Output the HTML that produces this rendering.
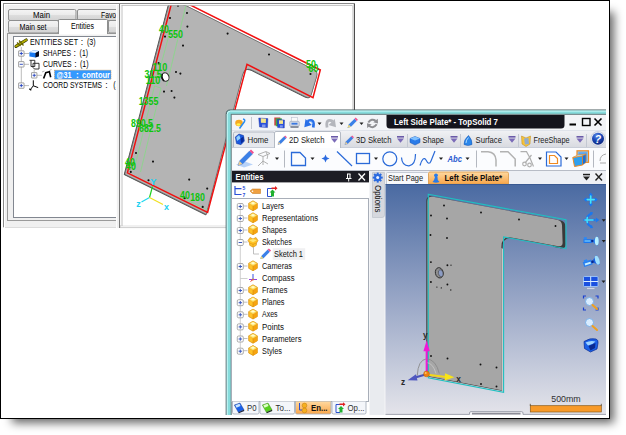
<!DOCTYPE html>
<html><head><meta charset="utf-8"><title>TopSolid</title>
<style>
html,body{margin:0;padding:0;background:#fff;overflow:hidden}
body{width:626px;height:435px;position:relative;font-family:"Liberation Sans", sans-serif}
#shadow{position:absolute;left:12px;top:12px;width:602px;height:411px;background:rgba(0,0,0,.6);filter:blur(5px)}
#frame{position:absolute;left:0;top:0;width:608px;height:416.600px;border:1px solid #000;border-right-width:1.300px;border-bottom-width:1.400px;background:#fff}
svg{position:absolute;left:0;top:0;font-family:"Liberation Sans", sans-serif}
</style></head><body>
<div id="shadow"></div>
<div id="frame"></div>
<svg width="626" height="435" viewBox="0 0 626 435">
<defs>
<linearGradient id="tabg" x1="0" y1="0" x2="0" y2="1"><stop offset="0" stop-color="#f4f4f4"/><stop offset=".5" stop-color="#ebebeb"/><stop offset=".5" stop-color="#dedede"/><stop offset="1" stop-color="#d2d2d2"/></linearGradient>
<linearGradient id="viewg" x1="0" y1="0" x2="0" y2="1"><stop offset="0" stop-color="#4a6aa2"/><stop offset=".5" stop-color="#98a6c6"/><stop offset="1" stop-color="#e4e4ea"/></linearGradient>
<linearGradient id="ribg" x1="0" y1="0" x2="0" y2="1"><stop offset="0" stop-color="#f0f1f4"/><stop offset="1" stop-color="#d8dae0"/></linearGradient>
<linearGradient id="org" x1="0" y1="0" x2="0" y2="1"><stop offset="0" stop-color="#ffd9a0"/><stop offset="1" stop-color="#f9a64a"/></linearGradient>
<linearGradient id="cubeg" x1="0" y1="0" x2="1" y2="1"><stop offset="0" stop-color="#ffe27a"/><stop offset="1" stop-color="#f0a010"/></linearGradient>
<radialGradient id="blueball" cx=".35" cy=".3" r=".8"><stop offset="0" stop-color="#9fd0ff"/><stop offset=".5" stop-color="#2a6fd8"/><stop offset="1" stop-color="#0b2f8a"/></radialGradient>
<radialGradient id="helpball" cx=".4" cy=".25" r=".85"><stop offset="0" stop-color="#5a8ae8"/><stop offset=".45" stop-color="#1a48b8"/><stop offset="1" stop-color="#0a1e70"/></radialGradient>
<clipPath id="v1clip"><rect x="122.4" y="5.8" width="229.6" height="219.2"/></clipPath>
<clipPath id="imgclip"><rect x="3" y="3" width="603" height="412"/></clipPath>
<clipPath id="p1clip"><rect x="3" y="3" width="113" height="225"/></clipPath>
</defs>
<g clip-path="url(#imgclip)">
<rect x="3" y="3" width="352" height="225" fill="#f0f0f0" />
<line x1="3" y1="3.5" x2="355" y2="3.5" stroke="#8a8a8a" stroke-width="1" />
<line x1="3.5" y1="3" x2="3.5" y2="228" stroke="#8a8a8a" stroke-width="1" />
<line x1="3" y1="227.5" x2="120" y2="227.5" stroke="#dcdcdc" stroke-width="1" />
<line x1="4" y1="4.5" x2="355" y2="4.5" stroke="#ffffff" stroke-width="1" />
<line x1="4.5" y1="4" x2="4.5" y2="228" stroke="#ffffff" stroke-width="1" />
<g clip-path="url(#p1clip)">
<rect x="7.5" y="33.5" width="120" height="187" fill="#f0f0f0" stroke="#9a9a9a" stroke-width="1" />
<rect x="8.5" y="9.5" width="67.5" height="11" fill="url(#tabg)" stroke="#8e8f8f" stroke-width="1" rx="1.5" />
<rect x="77.5" y="9.5" width="60" height="11" fill="url(#tabg)" stroke="#8e8f8f" stroke-width="1" rx="1.5" />
<rect x="8.5" y="20.5" width="50" height="12.5" fill="url(#tabg)" stroke="#8e8f8f" stroke-width="1" rx="1.5" />
<rect x="108.5" y="20.5" width="40" height="12.5" fill="url(#tabg)" stroke="#8e8f8f" stroke-width="1" rx="1.5" />
<path d="M58.5 34 V20 Q58.5 19.5 59.5 19.5 H106.5 Q107.5 19.5 107.5 20.5 V34" fill="#ffffff" stroke="#8e8f8f"/>
<rect x="59" y="33" width="48" height="1.5" fill="#ffffff" />
<text x="41.5" y="18" font-size="8.5" fill="#000" font-weight="normal" text-anchor="middle" textLength="17" lengthAdjust="spacingAndGlyphs" >Main</text>
<text x="101" y="18" font-size="8.5" fill="#000" font-weight="normal" text-anchor="start" textLength="28" lengthAdjust="spacingAndGlyphs" >Favorites</text>
<text x="33" y="30" font-size="8.5" fill="#000" font-weight="normal" text-anchor="middle" textLength="27" lengthAdjust="spacingAndGlyphs" >Main set</text>
<text x="82.5" y="29" font-size="8.5" fill="#000" font-weight="normal" text-anchor="middle" textLength="23" lengthAdjust="spacingAndGlyphs" >Entities</text>
<rect x="13.5" y="36.5" width="120" height="181" fill="#ffffff" stroke="#828790" stroke-width="1" />
<g stroke="#b4b4b4" stroke-width=".9">
<line x1="21.3" y1="47" x2="21.3" y2="85.5" stroke="#b4b4b4" stroke-width="0.9" />
<line x1="24" y1="53.5" x2="29" y2="53.5" stroke="#b4b4b4" stroke-width="0.9" />
<line x1="24" y1="64.3" x2="29" y2="64.3" stroke="#b4b4b4" stroke-width="0.9" />
<line x1="24" y1="85.6" x2="29" y2="85.6" stroke="#b4b4b4" stroke-width="0.9" />
<line x1="34.2" y1="69.5" x2="34.2" y2="75" stroke="#b4b4b4" stroke-width="0.9" />
<line x1="37" y1="75.3" x2="42" y2="75.3" stroke="#b4b4b4" stroke-width="0.9" />
</g>
<path d="M16 46.300 L26.200 40" stroke="#3a3a00" stroke-width="3.200" stroke-linecap="round"/><path d="M16 46.300 L26.200 40" stroke="#b4b000" stroke-width="1.800" stroke-linecap="round" stroke-dasharray="2 .8"/><path d="M19 40.500 L23.500 45.500 M17 42.500 L20.500 46" stroke="#6a6800" stroke-width="1.200"/>
<text x="30" y="45.4" font-size="8.6" fill="#000" font-weight="normal" text-anchor="start" textLength="48" lengthAdjust="spacingAndGlyphs" >ENTITIES SET</text>
<text x="80.8" y="45.2" font-size="8.6" fill="#000" font-weight="normal" text-anchor="start" >:</text>
<text x="87" y="45.4" font-size="8.6" fill="#000" font-weight="normal" text-anchor="start" textLength="8.6" lengthAdjust="spacingAndGlyphs" >(3)</text>
<rect x="18.6" y="50.8" width="5.4" height="5.4" fill="#fdfdfd" stroke="#8c8c8c" stroke-width="0.8" rx="0.3" />
<line x1="19.7" y1="53.5" x2="22.900000000000002" y2="53.5" stroke="#2040c0" stroke-width="0.9" />
<line x1="21.3" y1="51.9" x2="21.3" y2="55.1" stroke="#2040c0" stroke-width="0.9" />
<path d="M29.400 52.300 L33.500 50.200 L39 51 L39 56.300 L35.500 57.500 L29.400 56.500 Z" fill="#1878f0"/><path d="M29.400 52.300 L33.500 50.200 L39 51 L35.500 53 Z" fill="#e8f4ff"/><path d="M35.500 53 L39 51 L39 56.300 L35.500 57.500 Z" fill="#080818"/>
<text x="43" y="56.3" font-size="8.6" fill="#000" font-weight="normal" text-anchor="start" textLength="28" lengthAdjust="spacingAndGlyphs" >SHAPES</text>
<text x="73.6" y="56.1" font-size="8.6" fill="#000" font-weight="normal" text-anchor="start" >:</text>
<text x="79.6" y="56.3" font-size="8.6" fill="#000" font-weight="normal" text-anchor="start" textLength="8.4" lengthAdjust="spacingAndGlyphs" >(1)</text>
<rect x="18.6" y="61.599999999999994" width="5.4" height="5.4" fill="#fdfdfd" stroke="#8c8c8c" stroke-width="0.8" rx="0.3" />
<line x1="19.7" y1="64.3" x2="22.900000000000002" y2="64.3" stroke="#2040c0" stroke-width="0.9" />
<path d="M29.500 60.300 H34.800 V66.500 H31 V60.300 M33 63.300 H39 V69 H34.500 L33 67.500 Z" fill="none" stroke="#202020" stroke-width=".9"/>
<text x="43" y="67" font-size="8.6" fill="#000" font-weight="normal" text-anchor="start" textLength="28.6" lengthAdjust="spacingAndGlyphs" >CURVES</text>
<text x="74.2" y="66.8" font-size="8.6" fill="#000" font-weight="normal" text-anchor="start" >:</text>
<text x="80" y="67" font-size="8.6" fill="#000" font-weight="normal" text-anchor="start" textLength="8.6" lengthAdjust="spacingAndGlyphs" >(1)</text>
<rect x="31.500000000000004" y="72.6" width="5.4" height="5.4" fill="#fdfdfd" stroke="#8c8c8c" stroke-width="0.8" rx="0.3" />
<line x1="32.6" y1="75.3" x2="35.800000000000004" y2="75.3" stroke="#2040c0" stroke-width="0.9" />
<line x1="34.2" y1="73.7" x2="34.2" y2="76.89999999999999" stroke="#2040c0" stroke-width="0.9" />
<path d="M43.600 78.500 L45.800 72.700 L49.400 71.800 L50.700 77.200" fill="none" stroke="#000" stroke-width="1.600"/>
<line x1="42" y1="72" x2="44.5" y2="71" stroke="#808080" stroke-width="0.6" />
<line x1="49.4" y1="70.5" x2="51.5" y2="69.5" stroke="#808080" stroke-width="0.6" />
<rect x="54.5" y="70.2" width="56.5" height="9" fill="#3399ff" />
<rect x="54.5" y="70.2" width="56.5" height="9" fill="none" stroke="#c89858" stroke-width="0.8" stroke-dasharray="1 1"/>
<text x="56.6" y="77.8" font-size="8.4" fill="#ffffff" font-weight="bold" text-anchor="start" textLength="15" lengthAdjust="spacingAndGlyphs" >@31</text>
<text x="76" y="77.6" font-size="8.4" fill="#ffffff" font-weight="bold" text-anchor="start" >:</text>
<text x="82" y="77.8" font-size="8.4" fill="#ffffff" font-weight="bold" text-anchor="start" textLength="28" lengthAdjust="spacingAndGlyphs" >contour</text>
<rect x="18.6" y="82.89999999999999" width="5.4" height="5.4" fill="#fdfdfd" stroke="#8c8c8c" stroke-width="0.8" rx="0.3" />
<line x1="19.7" y1="85.6" x2="22.900000000000002" y2="85.6" stroke="#2040c0" stroke-width="0.9" />
<line x1="21.3" y1="84.0" x2="21.3" y2="87.19999999999999" stroke="#2040c0" stroke-width="0.9" />
<path d="M33.300 80.300 V85.800 L30 90 M33.300 85.800 L38.200 87.600 M29.600 88.600 L30 90 L31.500 89.800" fill="none" stroke="#000" stroke-width="1"/>
<text x="43" y="88.3" font-size="8.6" fill="#000" font-weight="normal" text-anchor="start" textLength="59" lengthAdjust="spacingAndGlyphs" >COORD SYSTEMS</text>
<text x="105.2" y="88.1" font-size="8.6" fill="#000" font-weight="normal" text-anchor="start" >:</text>
<text x="113.2" y="88.3" font-size="8.6" fill="#000" font-weight="normal" text-anchor="start" textLength="8.6" lengthAdjust="spacingAndGlyphs" >(1)</text>
</g>
<rect x="116" y="5" width="4" height="223" fill="#f0f0f0" />
<line x1="116.5" y1="5" x2="116.5" y2="228" stroke="#fdfdfd" stroke-width="1" />
<line x1="119.6" y1="4" x2="119.6" y2="228" stroke="#7a7a7a" stroke-width="1.2" />
<rect x="120.2" y="4" width="233.6" height="221" fill="#ffffff" />
<line x1="121.6" y1="5.4" x2="352.5" y2="5.4" stroke="#b0b0b0" stroke-width="0.8" />
<line x1="122" y1="5" x2="122" y2="226" stroke="#b0b0b0" stroke-width="0.8" />
<line x1="352.5" y1="5" x2="352.5" y2="228" stroke="#dcdcdc" stroke-width="1" />
<line x1="354.4" y1="4" x2="354.4" y2="228" stroke="#4c4c4c" stroke-width="1.2" />
<line x1="120" y1="227.6" x2="354" y2="227.6" stroke="#c4c4c4" stroke-width="0.8" />
<g clip-path="url(#v1clip)">
<path d="M124.8 174.3 L206.2 214.4 L242.6 74.7 Q244.7 66.5 252.3 70.3 L305.6 96.8 Q310.1 99.0 311.4 94.2 L316.8 76.0 Q317.9 71.6 313.9 69.6 L170.6 -2.0 Z" fill="#505050" stroke="#505050" stroke-width="1.200" stroke-linejoin="round" transform="translate(-.4 .2)"/>
<path d="M124.8 174.3 L206.2 214.4 L242.6 74.7 Q244.7 66.5 252.3 70.3 L305.6 96.8 Q310.1 99.0 311.4 94.2 L316.8 76.0 Q317.9 71.6 313.9 69.6 L170.6 -2.0 Z" fill="#b4b4b4" stroke="#6a6a6a" stroke-width=".7" stroke-linejoin="round"/>
<g stroke="#7fe07f" stroke-width=".7" fill="none">
<line x1="186" y1="5" x2="166.5" y2="86" stroke="#7fe07f" stroke-width="0.7" />
<line x1="169.5" y1="33" x2="158" y2="76" stroke="#7fe07f" stroke-width="0.7" />
<line x1="154.5" y1="86" x2="134" y2="170" stroke="#7fe07f" stroke-width="0.7" />
<line x1="161" y1="88" x2="140.5" y2="172" stroke="#7fe07f" stroke-width="0.7" />
<line x1="154.5" y1="86" x2="161" y2="88" stroke="#7fe07f" stroke-width="0.7" />
<line x1="187" y1="200" x2="208" y2="210" stroke="#7fe07f" stroke-width="0.6" />
</g>
<polygon points="127.4,172.8 207.6,212.4 247,64.4 313,97.6 320.3,70 173.3,-3.5" fill="none" stroke="#f01010" stroke-width="1.500" stroke-linejoin="miter"/>
<circle cx="170" cy="18" r="1.05" fill="#101010"/>
<circle cx="187" cy="13" r="1.05" fill="#101010"/>
<circle cx="187.4" cy="26.6" r="1.05" fill="#101010"/>
<circle cx="227.6" cy="33.6" r="1.05" fill="#101010"/>
<circle cx="165" cy="36.6" r="1.05" fill="#101010"/>
<circle cx="183" cy="45.6" r="1.05" fill="#101010"/>
<circle cx="158.6" cy="63" r="1.05" fill="#101010"/>
<circle cx="176" cy="72" r="1.05" fill="#101010"/>
<circle cx="180.4" cy="73.6" r="1.05" fill="#101010"/>
<circle cx="164" cy="91.6" r="1.05" fill="#101010"/>
<circle cx="171.6" cy="91" r="1.05" fill="#101010"/>
<circle cx="174.4" cy="97.6" r="1.05" fill="#101010"/>
<circle cx="136" cy="153" r="1.05" fill="#101010"/>
<circle cx="153" cy="161.6" r="1.05" fill="#101010"/>
<circle cx="178" cy="5.8" r="1.05" fill="#101010"/>
<circle cx="130.8" cy="171.9" r="1.05" fill="#101010"/>
<circle cx="148.5" cy="180.2" r="1.05" fill="#101010"/>
<circle cx="184.7" cy="198.2" r="1.05" fill="#101010"/>
<circle cx="202.7" cy="206.9" r="1.05" fill="#101010"/>
<circle cx="189.2" cy="179.6" r="1.05" fill="#101010"/>
<circle cx="207.2" cy="188.6" r="1.05" fill="#101010"/>
<circle cx="269" cy="54.5" r="1.05" fill="#101010"/>
<circle cx="310.5" cy="74" r="1.05" fill="#101010"/>
<ellipse cx="165.3" cy="77" rx="3.6" ry="4.3" fill="#ffffff" stroke="#303030" stroke-width="1" transform="rotate(-20 165.3 77)"/>
<path d="M162.300 74 Q161 78 164 81" fill="none" stroke="#101010" stroke-width="1.6"/>
<text x="164" y="33" font-size="10.5" fill="#0cc40c" font-weight="bold" text-anchor="middle" textLength="9.8" lengthAdjust="spacingAndGlyphs">40</text>
<text x="175.5" y="38" font-size="10.5" fill="#0cc40c" font-weight="bold" text-anchor="middle" textLength="14.7" lengthAdjust="spacingAndGlyphs">550</text>
<text x="160" y="70.5" font-size="10.5" fill="#0cc40c" font-weight="bold" text-anchor="middle" textLength="14.7" lengthAdjust="spacingAndGlyphs">110</text>
<text x="153" y="78" font-size="10.5" fill="#0cc40c" font-weight="bold" text-anchor="middle" textLength="17.1" lengthAdjust="spacingAndGlyphs">31.5</text>
<text x="153" y="83.5" font-size="10.5" fill="#0cc40c" font-weight="bold" text-anchor="middle" textLength="14.7" lengthAdjust="spacingAndGlyphs">110</text>
<text x="148.5" y="104.5" font-size="10.5" fill="#0cc40c" font-weight="bold" text-anchor="middle" textLength="19.6" lengthAdjust="spacingAndGlyphs">1355</text>
<text x="142" y="126.5" font-size="10.5" fill="#0cc40c" font-weight="bold" text-anchor="middle" textLength="22.0" lengthAdjust="spacingAndGlyphs">890.5</text>
<text x="150" y="132" font-size="10.5" fill="#0cc40c" font-weight="bold" text-anchor="middle" textLength="22.0" lengthAdjust="spacingAndGlyphs">682.5</text>
<text x="130" y="166" font-size="10.5" fill="#0cc40c" font-weight="bold" text-anchor="middle" textLength="9.8" lengthAdjust="spacingAndGlyphs">40</text>
<text x="131" y="170" font-size="10.5" fill="#0cc40c" font-weight="bold" text-anchor="middle" textLength="9.8" lengthAdjust="spacingAndGlyphs">40</text>
<text x="185" y="198.5" font-size="10.5" fill="#0cc40c" font-weight="bold" text-anchor="middle" textLength="9.8" lengthAdjust="spacingAndGlyphs">40</text>
<text x="197.5" y="201" font-size="10.5" fill="#0cc40c" font-weight="bold" text-anchor="middle" textLength="14.7" lengthAdjust="spacingAndGlyphs">180</text>
<text x="311" y="68" font-size="10.5" fill="#0cc40c" font-weight="bold" text-anchor="middle" textLength="9.8" lengthAdjust="spacingAndGlyphs">50</text>
<text x="313.5" y="72" font-size="10.5" fill="#0cc40c" font-weight="bold" text-anchor="middle" textLength="9.8" lengthAdjust="spacingAndGlyphs">60</text>
<line x1="149.5" y1="197.5" x2="152.5" y2="186.5" stroke="#20d020" stroke-width="1.2" />
<line x1="149.5" y1="197.5" x2="141.5" y2="202" stroke="#20d8f0" stroke-width="1.2" />
<line x1="149.5" y1="197.5" x2="163" y2="204.5" stroke="#f0e020" stroke-width="1.2" />
<text x="153.5" y="184.5" font-size="9.5" fill="#20d0f0" font-weight="bold" text-anchor="middle" >Y</text>
<text x="138.5" y="207" font-size="9" fill="#20d0f0" font-weight="bold" text-anchor="middle" >z</text>
<text x="166.5" y="209.5" font-size="9" fill="#20d0f0" font-weight="bold" text-anchor="middle" >x</text>
</g>
</g>
<g clip-path="url(#imgclip)">
<path d="M226.200 420 V114.200 Q226.200 110 230.200 110 H610 V420 Z" fill="#86dcdc" stroke="#46585a" stroke-width="1"/>
<path d="M227.200 420 V114.500 Q227.200 111 230.700 111 H610" fill="none" stroke="#d0fbfb" stroke-width="1"/>
<rect x="231.2" y="114.3" width="380" height="305" fill="#ffffff" stroke="#66767a" stroke-width="1" />
<rect x="232" y="115" width="374" height="16" fill="#f3f4f7" />
<line x1="232" y1="130.5" x2="606" y2="130.5" stroke="#dfe3ea" stroke-width="1" />
<path d="M386.5 115 H564.500 V125 Q564.500 128.500 561 128.500 H390 Q386.5 128.500 386.5 125 Z" fill="#14141c"/>
<text x="394" y="124.8" font-size="9.3" fill="#ffffff" font-weight="bold" text-anchor="start" textLength="104" lengthAdjust="spacingAndGlyphs" >Left Side Plate* - TopSolid 7</text>
<rect x="569.5" y="123.5" width="6.5" height="2" fill="#000000" />
<rect x="582.5" y="118.5" width="7.5" height="7" fill="none" stroke="#000000" stroke-width="1.4" />
<path d="M594.5 118.500 L601.5 125.500 M601.5 118.500 L594.5 125.500" stroke="#000" stroke-width="1.6" fill="none"/>
<rect x="232" y="131" width="374" height="16.5" fill="url(#ribg)" />
<line x1="232" y1="147.5" x2="606" y2="147.5" stroke="#c9ced8" stroke-width="1" />
<path d="M233.500 147 V133.500 Q233.500 132 235 132 H273 Q274.500 132 274.500 133.500 V147" fill="#e7e9ee" stroke="#b4bac4"/>
<path d="M274.500 148 V133 Q274.500 131.500 276 131.500 H339 Q340.500 131.500 340.500 133 V148" fill="#ffffff" stroke="#b4bac4"/>
<rect x="275" y="147" width="65" height="1.2" fill="#ffffff" />
<path d="M235.300 137 L239 134 L243.500 135.500 L244.400 141 L241 144.700 L236.500 143.500 Z" fill="#1a5ae0" stroke="#0a2a90" stroke-width=".5"/><path d="M236.300 137.300 L239.200 135 L240.500 138.500 L237 141 Z" fill="#8fd0ff"/><path d="M240.500 138.500 L243.500 136.500 L243.800 141 L241 143.500 Z" fill="#0a2a98"/>
<text x="247.5" y="143.2" font-size="9.2" fill="#1a1a1a" font-weight="normal" text-anchor="start" textLength="21" lengthAdjust="spacingAndGlyphs" >Home</text>
<g transform="translate(282 140.5) scale(0.9)"><path d="M-4.5 4.5 L-3.5 1.5 L2.5 -4.5 L4.5 -2.5 L-1.5 3.500 Z" fill="#3a80e8" stroke="#2a60c8" stroke-width=".4"/><path d="M2.5 -4.5 L3.500 -5.5 L5.5 -3.500 L4.5 -2.5 Z" fill="#f05090"/><path d="M-4.5 4.5 L-3.500 1.5 L-1.5 3.500 Z" fill="#f0d090"/></g>
<text x="289" y="143.2" font-size="9.2" fill="#1a1a1a" font-weight="normal" text-anchor="start" textLength="35.5" lengthAdjust="spacingAndGlyphs" >2D Sketch</text>
<rect x="331.0" y="136.0" width="7" height="1.600" fill="#6a5aa8"/><path d="M331.0 138.6 H338.0 L334.5 142.79999999999998 Z" fill="#7b6bb8"/>
<g transform="translate(349 140.5) scale(0.9)"><path d="M-4.5 4.5 L-3.5 1.5 L2.5 -4.5 L4.5 -2.5 L-1.5 3.500 Z" fill="#3a80e8" stroke="#2a60c8" stroke-width=".4"/><path d="M2.5 -4.5 L3.500 -5.5 L5.5 -3.500 L4.5 -2.5 Z" fill="#f05090"/><path d="M-4.5 4.5 L-3.500 1.5 L-1.5 3.500 Z" fill="#f0d090"/></g>
<text x="356" y="143.2" font-size="9.2" fill="#1a1a1a" font-weight="normal" text-anchor="start" textLength="35.5" lengthAdjust="spacingAndGlyphs" >3D Sketch</text>
<rect x="397.0" y="136.0" width="7" height="1.600" fill="#6a5aa8"/><path d="M397.0 138.6 H404.0 L400.5 142.79999999999998 Z" fill="#7b6bb8"/>
<line x1="407.5" y1="134" x2="407.5" y2="147" stroke="#c3c8d2" stroke-width="1" />
<path d="M410 138.500 L415 136.500 L420 138.500 L420 142.500 L415 145 L410 142.500 Z" fill="#2a7be8" stroke="#1550b0" stroke-width=".5"/><path d="M410 138.500 L415 136.500 L420 138.500 L415 140.500 Z" fill="#7fc0ff"/>
<text x="422.5" y="143.2" font-size="9.2" fill="#1a1a1a" font-weight="normal" text-anchor="start" textLength="21.5" lengthAdjust="spacingAndGlyphs" >Shape</text>
<rect x="450.5" y="136.0" width="7" height="1.600" fill="#6a5aa8"/><path d="M450.5 138.6 H457.5 L454 142.79999999999998 Z" fill="#7b6bb8"/>
<line x1="460.5" y1="134" x2="460.5" y2="147" stroke="#c3c8d2" stroke-width="1" />
<path d="M464 144.500 Q463.500 140 468.500 135.500 Q472.500 140 472 144.500 Q468 146.500 464 144.500 Z" fill="#2a86ea" stroke="#1550b0" stroke-width=".5"/><path d="M466 143 Q466 140 468.500 137.500" stroke="#a8d8ff" stroke-width="1" fill="none"/>
<text x="475.5" y="143.2" font-size="9.2" fill="#1a1a1a" font-weight="normal" text-anchor="start" textLength="26.5" lengthAdjust="spacingAndGlyphs" >Surface</text>
<rect x="508.5" y="136.0" width="7" height="1.600" fill="#6a5aa8"/><path d="M508.5 138.6 H515.5 L512 142.79999999999998 Z" fill="#7b6bb8"/>
<line x1="518.5" y1="134" x2="518.5" y2="147" stroke="#c3c8d2" stroke-width="1" />
<path d="M521.500 136 L526 138 L530.500 136 L530 144 L526 146.500 L522 144 Z" fill="#f6c33a" stroke="#c08a10" stroke-width=".5"/><path d="M524 138.500 L528.500 138 L529 144 L525 144.500 Z" fill="#7fa8e8" opacity=".85"/>
<text x="533.5" y="143.2" font-size="9.2" fill="#1a1a1a" font-weight="normal" text-anchor="start" textLength="36" lengthAdjust="spacingAndGlyphs" >FreeShape</text>
<rect x="576.5" y="136.0" width="7" height="1.600" fill="#6a5aa8"/><path d="M576.5 138.6 H583.5 L580 142.79999999999998 Z" fill="#7b6bb8"/>
<line x1="586.5" y1="134" x2="586.5" y2="147" stroke="#c3c8d2" stroke-width="1" />
<circle cx="598" cy="138.800" r="7.300" fill="#e4e8f0" stroke="#b8c0d0" stroke-width=".6"/><circle cx="598" cy="138.800" r="6" fill="url(#helpball)"/>
<text x="598" y="142.7" font-size="10.5" fill="#ffffff" font-weight="bold" text-anchor="middle" font-style="italic">?</text>
<rect x="232" y="148" width="374" height="22" fill="#fbfcfe" />
<line x1="232" y1="170.5" x2="606" y2="170.5" stroke="#b8bcc6" stroke-width="1" />
<ellipse cx="239" cy="123" rx="3.800" ry="3.300" fill="#f6a820"/><ellipse cx="238.500" cy="124.500" rx="2" ry="1.300" fill="#fff04a"/><path d="M239.500 128.500 L244.500 121.500 Q245.500 119.500 243 119" fill="none" stroke="#2a8cf0" stroke-width="1.500"/>
<line x1="251.5" y1="117" x2="251.5" y2="129" stroke="#c4c8d0" stroke-width="1" />
<path d="M258.700 118 L267.900 118.600 L267.500 127.600 L259.500 127 Z" fill="#2a50d8" stroke="#1a30a0" stroke-width=".4"/><path d="M260.800 118.300 L266 118.700 L265.800 123 L260.900 122.700 Z" fill="#f4e48a"/><rect x="262" y="124.500" width="3.500" height="2.600" fill="#8098f0"/>
<rect x="274.300" y="117.500" width="6" height="8" fill="#d04040"/><rect x="275.800" y="118.300" width="6" height="8" fill="#40a848"/><path d="M277.300 119.500 L284.500 120 L284.300 128 L277.600 127.600 Z" fill="#2a50d8" stroke="#1a30a0" stroke-width=".4"/><rect x="279" y="120.300" width="4" height="3.600" fill="#f4e48a"/><rect x="280" y="125.300" width="2.800" height="2.200" fill="#8098f0"/>
<rect x="291.500" y="117.500" width="6" height="4.500" fill="#fafafa" stroke="#b0b8c8" stroke-width=".5"/><rect x="289.700" y="121.300" width="9.600" height="5" rx="1" fill="#d4dae6" stroke="#8a94aa" stroke-width=".5"/><rect x="291.500" y="122.800" width="6" height="1.800" fill="#3a78e0"/><rect x="290.500" y="126.300" width="8" height="1.500" fill="#707888"/>
<path d="M313.200 127.500 Q315 118 307.500 121.300" fill="none" stroke="#2a70e8" stroke-width="2.800"/><path d="M304.300 127.300 L305.500 119 L311.800 125 Z" fill="#2a70e8"/><path d="M312.300 124 Q312.300 120.500 309 121.500" fill="none" stroke="#8fc4ff" stroke-width=".8"/>
<path d="M317.5 122.5 H321.5 L319.5 125.0 Z" fill="#202020"/>
<path d="M327.100 127.500 Q325.300 118 332.800 121.300" fill="none" stroke="#b4b6bc" stroke-width="2.800"/><path d="M336 127.300 L334.800 119 L328.500 125 Z" fill="#b4b6bc"/>
<path d="M339.5 122.5 H343.5 L341.5 125.0 Z" fill="#202020"/>
<path d="M347.500 128 L348.700 124.500 L354.500 118.700 L356.700 120.900 L351 126.700 Z" fill="#3a80e8"/><path d="M354.500 118.700 L355.700 117.500 L357.900 119.700 L356.700 120.900 Z" fill="#f05090"/><path d="M347.500 128 L348.700 124.500 L351 126.700 Z" fill="#f0d878"/>
<path d="M359.5 122.5 H363.5 L361.5 125.0 Z" fill="#202020"/>
<path d="M368.300 122.500 Q371.500 117.800 375.800 120.800" fill="none" stroke="#8e8e92" stroke-width="2"/><path d="M373.300 122.300 L377.800 118.800 L378 123.500 Z" fill="#8e8e92"/><path d="M376.700 124.300 Q373.500 129 369.200 126" fill="none" stroke="#8e8e92" stroke-width="2"/><path d="M371.700 124.500 L367.200 128 L367 123.300 Z" fill="#8e8e92"/>
<path d="M236 164.500 L245 161.500 L253 164.500 L244 167.500 Z" fill="#a8c8f8" opacity=".8"/>
<path d="M238 165.500 L239.500 161 L249.500 151 L252.500 154 L242.500 164 Z" fill="#3a80e8" stroke="#2a60c8" stroke-width=".4"/><path d="M249.500 151 L251 149.500 L254 152.500 L252.500 154 Z" fill="#f05090"/><path d="M238 165.500 L239.500 161 L242.500 164 Z" fill="#f0d090"/>
<g stroke="#a0a0a0" stroke-width=".8" fill="none"><path d="M258 154.500 L266 151.500 L270 153.500 L263 156.500 Z M263 156.500 V165 M258 166 L263 161 L268 164 M266 152 Q269 156 267 159"/></g>
<path d="M275 157.5 H279 L277 160.0 Z" fill="#202020"/>
<line x1="284.5" y1="150.5" x2="284.5" y2="167.5" stroke="#b4b8c0" stroke-width="1" />
<path d="M291.500 152.500 H300 L305.500 158 V165.500 H291.500 Z" fill="none" stroke="#2a6ad8" stroke-width="1.3"/>
<path d="M310.5 157.5 H314.5 L312.5 160.0 Z" fill="#202020"/>
<path d="M325.500 154.500 L326.700 157.300 L329.500 158.500 L326.700 159.700 L325.500 162.500 L324.300 159.700 L321.500 158.500 L324.300 157.300 Z" fill="#2a6ae0"/>
<line x1="337" y1="151.5" x2="352" y2="166" stroke="#2a6ad8" stroke-width="1.2" />
<rect x="356.5" y="153.5" width="13" height="10" fill="none" stroke="#2a6ad8" stroke-width="1.3" />
<path d="M374 157.5 H378 L376 160.0 Z" fill="#202020"/>
<circle cx="389.800" cy="158.800" r="7" fill="none" stroke="#2a6ad8" stroke-width="1.2"/>
<path d="M401.500 157.500 Q402 166 409 165.800 Q415.500 165 415.500 154" fill="none" stroke="#2a6ad8" stroke-width="1.2"/>
<path d="M420 165.500 Q423 155.500 426 160 Q429 166 431 161 Q433 156 435 151" fill="none" stroke="#2a6ad8" stroke-width="1.2"/>
<path d="M439 157.5 H443 L441 160.0 Z" fill="#202020"/>
<text x="447.5" y="162" font-size="8.5" fill="#2a5ad0" font-weight="bold" text-anchor="start" textLength="14.5" lengthAdjust="spacingAndGlyphs" font-style="italic">Abc</text>
<path d="M465.5 157.5 H469.5 L467.5 160.0 Z" fill="#202020"/>
<line x1="476.5" y1="150.5" x2="476.5" y2="167.5" stroke="#b4b8c0" stroke-width="1" />
<path d="M481 151.700 H488 Q495.500 152.200 496 160 V166.500" fill="none" stroke="#b2b2b2" stroke-width="1.500"/>
<path d="M500 151.700 H508 L515.200 159 V166.500" fill="none" stroke="#b2b2b2" stroke-width="1.500"/>
<g stroke="#b0b0b0" fill="none" stroke-width="1.200"><path d="M520.500 151.700 H526.500 L530 158 L533.500 166.500 M531.500 155 L525 163"/><circle cx="524.500" cy="164" r="1.800"/><circle cx="529.500" cy="165" r="1.800"/></g>
<path d="M538 157.5 H542 L540 160.0 Z" fill="#202020"/>
<path d="M546.500 152 H556 L561 157 V166 H546.500 Z" fill="#ffffff" stroke="#2a6ad8" stroke-width="1.2"/><path d="M549.500 155.500 H554.500 L557.500 158.500 V163.500 H549.500 Z" fill="none" stroke="#f08a20" stroke-width="1.2"/>
<path d="M564.5 157.5 H568.5 L566.5 160.0 Z" fill="#202020"/>
<rect x="577" y="150.800" width="11.500" height="11.500" fill="#8ac4f4" stroke="#f08a20" stroke-width="1.200"/><rect x="578.500" y="152.300" width="8.500" height="8.500" fill="#5aa4ec"/>
<path d="M572.800 157.500 L582.500 155.800 L582.500 165 L574.500 166.500 Z" fill="#30a0f0" stroke="#f08a20" stroke-width="1"/><path d="M572.800 157.500 L578 154.800 L586 154.200 L582.500 155.800 Z" fill="#9fdcff" stroke="#f08a20" stroke-width=".6"/><path d="M582.500 155.800 L586 154.200 L586 162.500 L582.500 165 Z" fill="#1a70d8" stroke="#f08a20" stroke-width=".6"/>
<line x1="593.5" y1="150.5" x2="593.5" y2="167.5" stroke="#b4b8c0" stroke-width="1" />
<path d="M606 154 Q600 155 600 161 M600 163 H606" fill="none" stroke="#a8a8a8" stroke-width="1"/>
<rect x="232" y="171" width="137.5" height="244" fill="#ffffff" />
<rect x="232" y="171" width="137" height="11.4" fill="#1c1c24" />
<text x="235.5" y="179.9" font-size="9.3" fill="#ffffff" font-weight="bold" text-anchor="start" textLength="28" lengthAdjust="spacingAndGlyphs" >Entities</text>
<path d="M347 174 H350.500 M347.500 174 V178.500 M350 174 V178.500 M346 178.500 H351.500 M348.700 178.500 V181.500" stroke="#ffffff" stroke-width="1" fill="none"/>
<path d="M358.500 173.500 L365 180.500 M365 173.500 L358.500 180.500" stroke="#ffffff" stroke-width="1.3" fill="none"/>
<path d="M235 186 V194.500 H241.500 M235 188.700 H241.500" fill="none" stroke="#2a50d8" stroke-width="1.200"/>
<text x="242.5" y="190" font-size="5" fill="#2a50d8" font-weight="bold" text-anchor="start" >5</text>
<text x="242.5" y="196.5" font-size="5" fill="#2a50d8" font-weight="bold" text-anchor="start" >7</text>
<path d="M250 191 L252.500 189 H260.500 V193.500 H252.500 Z" fill="#f0a040" stroke="#c07010" stroke-width=".5"/><circle cx="252.500" cy="191.200" r=".8" fill="#fff"/>
<path d="M272 188.500 H267.500 V196.500 H272" fill="none" stroke="#2a50d0" stroke-width="1"/><path d="M271 196.500 V192.500 H269.500 L272.500 189.500 L275.500 192.500 H274 V196.500 Z" fill="#20b030"/><path d="M271.500 187.500 H275 V186 L277.500 188.200 L275 190.400 V189 H271.500 Z" fill="#e02020"/>
<rect x="231.5" y="198.5" width="137" height="203" fill="#ffffff" stroke="#a8aeb8" stroke-width="1" />
<line x1="240.3" y1="209.5" x2="240.3" y2="348" stroke="#c4c4c4" stroke-width="0.8" />
<line x1="243.5" y1="206" x2="247.5" y2="206" stroke="#b0b0b0" stroke-width="0.8" />
<rect x="237.3" y="203.5" width="6" height="6" fill="#fdfdfd" stroke="#a2a2a2" stroke-width="0.9" rx="1.2" />
<line x1="238.60000000000002" y1="206.5" x2="242.0" y2="206.5" stroke="#3a58c0" stroke-width="1" />
<line x1="240.3" y1="204.8" x2="240.3" y2="208.2" stroke="#3a58c0" stroke-width="1" />
<g transform="translate(253 205.7)"><path d="M-4.300 -2.300 L0 -4.800 L4.300 -2.300 L4.300 2.600 L0 5 L-4.300 2.600 Z" fill="#ffc226" stroke="#d48a0a" stroke-width=".7"/><path d="M0 .2 L4.300 -2.300 L4.300 2.600 L0 5 Z" fill="#f6a410"/><path d="M-4.300 -2.300 L0 -4.800 L4.300 -2.300 L0 .2 Z" fill="#ffe672" stroke="#e09a18" stroke-width=".4"/><path d="M-2.200 -2.600 L0 -3.800 L2.200 -2.600 L0 -1.400 Z" fill="#fffbd0"/><path d="M0 .2 V5" stroke="#d48a0a" stroke-width=".6"/></g>
<text x="262" y="209.1" font-size="9.2" fill="#101010" font-weight="normal" text-anchor="start" textLength="22" lengthAdjust="spacingAndGlyphs" >Layers</text>
<line x1="243.5" y1="218" x2="247.5" y2="218" stroke="#b0b0b0" stroke-width="0.8" />
<rect x="237.3" y="215.5" width="6" height="6" fill="#fdfdfd" stroke="#a2a2a2" stroke-width="0.9" rx="1.2" />
<line x1="238.60000000000002" y1="218.5" x2="242.0" y2="218.5" stroke="#3a58c0" stroke-width="1" />
<line x1="240.3" y1="216.8" x2="240.3" y2="220.2" stroke="#3a58c0" stroke-width="1" />
<g transform="translate(253 217.7)"><path d="M-4.300 -2.300 L0 -4.800 L4.300 -2.300 L4.300 2.600 L0 5 L-4.300 2.600 Z" fill="#ffc226" stroke="#d48a0a" stroke-width=".7"/><path d="M0 .2 L4.300 -2.300 L4.300 2.600 L0 5 Z" fill="#f6a410"/><path d="M-4.300 -2.300 L0 -4.800 L4.300 -2.300 L0 .2 Z" fill="#ffe672" stroke="#e09a18" stroke-width=".4"/><path d="M-2.200 -2.600 L0 -3.800 L2.200 -2.600 L0 -1.400 Z" fill="#fffbd0"/><path d="M0 .2 V5" stroke="#d48a0a" stroke-width=".6"/></g>
<text x="262" y="221.1" font-size="9.2" fill="#101010" font-weight="normal" text-anchor="start" textLength="56" lengthAdjust="spacingAndGlyphs" >Representations</text>
<line x1="243.5" y1="230" x2="247.5" y2="230" stroke="#b0b0b0" stroke-width="0.8" />
<rect x="237.3" y="227.5" width="6" height="6" fill="#fdfdfd" stroke="#a2a2a2" stroke-width="0.9" rx="1.2" />
<line x1="238.60000000000002" y1="230.5" x2="242.0" y2="230.5" stroke="#3a58c0" stroke-width="1" />
<line x1="240.3" y1="228.8" x2="240.3" y2="232.2" stroke="#3a58c0" stroke-width="1" />
<g transform="translate(253 229.7)"><path d="M-4.300 -2.300 L0 -4.800 L4.300 -2.300 L4.300 2.600 L0 5 L-4.300 2.600 Z" fill="#ffc226" stroke="#d48a0a" stroke-width=".7"/><path d="M0 .2 L4.300 -2.300 L4.300 2.600 L0 5 Z" fill="#f6a410"/><path d="M-4.300 -2.300 L0 -4.800 L4.300 -2.300 L0 .2 Z" fill="#ffe672" stroke="#e09a18" stroke-width=".4"/><path d="M-2.200 -2.600 L0 -3.800 L2.200 -2.600 L0 -1.400 Z" fill="#fffbd0"/><path d="M0 .2 V5" stroke="#d48a0a" stroke-width=".6"/></g>
<text x="262" y="233.1" font-size="9.2" fill="#101010" font-weight="normal" text-anchor="start" textLength="24.5" lengthAdjust="spacingAndGlyphs" >Shapes</text>
<line x1="243.5" y1="242" x2="247.5" y2="242" stroke="#b0b0b0" stroke-width="0.8" />
<rect x="237.3" y="239.5" width="6" height="6" fill="#fdfdfd" stroke="#a2a2a2" stroke-width="0.9" rx="1.2" />
<line x1="238.60000000000002" y1="242.5" x2="242.0" y2="242.5" stroke="#3a58c0" stroke-width="1" />
<g transform="translate(253 242)"><path d="M-5 -1.500 L-3 -4.500 L0 -3 L3 -4.500 L5 -1.500 L3.500 1 L3.300 3.300 L0 5.200 L-3.300 3.300 L-3.500 1 Z" fill="#ffc226" stroke="#d48a0a" stroke-width=".6"/><path d="M-3.800 -1.800 L0 -3 L3.800 -1.800 L0 .3 Z" fill="#ffe672"/><path d="M-3.500 1 L0 2.300 L3.500 1 M0 2.300 V5" fill="none" stroke="#d48a0a" stroke-width=".5"/></g>
<text x="262" y="245.1" font-size="9.2" fill="#101010" font-weight="normal" text-anchor="start" textLength="30" lengthAdjust="spacingAndGlyphs" >Sketches</text>
<path d="M253.500 247 V254 H259" fill="none" stroke="#b0b0b0" stroke-width=".8"/>
<g transform="translate(265.5 254)"><path d="M-5.200 5 L-4.200 2 L2.200 -4.400 L4.400 -2.200 L-2 4.200 Z" fill="#3a80e8"/><path d="M2.200 -4.400 L3.400 -5.600 L5.600 -3.400 L4.400 -2.200 Z" fill="#f05090"/><path d="M-5.200 5 L-4.200 2 L-2 4.200 Z" fill="#f0d878"/></g>
<rect x="272.7" y="248.2" width="32.5" height="11.6" fill="#f0f0f2" />
<text x="274" y="257.1" font-size="9.2" fill="#101010" font-weight="normal" text-anchor="start" textLength="29" lengthAdjust="spacingAndGlyphs" >Sketch 1</text>
<line x1="243.5" y1="266" x2="247.5" y2="266" stroke="#b0b0b0" stroke-width="0.8" />
<rect x="237.3" y="263.5" width="6" height="6" fill="#fdfdfd" stroke="#a2a2a2" stroke-width="0.9" rx="1.2" />
<line x1="238.60000000000002" y1="266.5" x2="242.0" y2="266.5" stroke="#3a58c0" stroke-width="1" />
<line x1="240.3" y1="264.8" x2="240.3" y2="268.2" stroke="#3a58c0" stroke-width="1" />
<g transform="translate(253 265.7)"><path d="M-4.300 -2.300 L0 -4.800 L4.300 -2.300 L4.300 2.600 L0 5 L-4.300 2.600 Z" fill="#ffc226" stroke="#d48a0a" stroke-width=".7"/><path d="M0 .2 L4.300 -2.300 L4.300 2.600 L0 5 Z" fill="#f6a410"/><path d="M-4.300 -2.300 L0 -4.800 L4.300 -2.300 L0 .2 Z" fill="#ffe672" stroke="#e09a18" stroke-width=".4"/><path d="M-2.200 -2.600 L0 -3.800 L2.200 -2.600 L0 -1.400 Z" fill="#fffbd0"/><path d="M0 .2 V5" stroke="#d48a0a" stroke-width=".6"/></g>
<text x="262" y="269.1" font-size="9.2" fill="#101010" font-weight="normal" text-anchor="start" textLength="30" lengthAdjust="spacingAndGlyphs" >Cameras</text>
<line x1="240.3" y1="278.5" x2="247.5" y2="278.5" stroke="#c4c4c4" stroke-width="0.8" />
<path d="M249 279.5 H257" stroke="#8a2be2" stroke-width=".9"/><path d="M253 274 V279.5" stroke="#2040e0" stroke-width=".9"/><path d="M253 279.5 L250.500 281.5" stroke="#e02020" stroke-width=".9"/><circle cx="253" cy="279.5" r=".9" fill="#e08020"/>
<text x="262" y="281.1" font-size="9.2" fill="#101010" font-weight="normal" text-anchor="start" textLength="32.5" lengthAdjust="spacingAndGlyphs" >Compass</text>
<line x1="243.5" y1="290" x2="247.5" y2="290" stroke="#b0b0b0" stroke-width="0.8" />
<rect x="237.3" y="287.5" width="6" height="6" fill="#fdfdfd" stroke="#a2a2a2" stroke-width="0.9" rx="1.2" />
<line x1="238.60000000000002" y1="290.5" x2="242.0" y2="290.5" stroke="#3a58c0" stroke-width="1" />
<line x1="240.3" y1="288.8" x2="240.3" y2="292.2" stroke="#3a58c0" stroke-width="1" />
<g transform="translate(253 289.7)"><path d="M-4.300 -2.300 L0 -4.800 L4.300 -2.300 L4.300 2.600 L0 5 L-4.300 2.600 Z" fill="#ffc226" stroke="#d48a0a" stroke-width=".7"/><path d="M0 .2 L4.300 -2.300 L4.300 2.600 L0 5 Z" fill="#f6a410"/><path d="M-4.300 -2.300 L0 -4.800 L4.300 -2.300 L0 .2 Z" fill="#ffe672" stroke="#e09a18" stroke-width=".4"/><path d="M-2.200 -2.600 L0 -3.800 L2.200 -2.600 L0 -1.400 Z" fill="#fffbd0"/><path d="M0 .2 V5" stroke="#d48a0a" stroke-width=".6"/></g>
<text x="262" y="293.1" font-size="9.2" fill="#101010" font-weight="normal" text-anchor="start" textLength="25.5" lengthAdjust="spacingAndGlyphs" >Frames</text>
<line x1="243.5" y1="302.2" x2="247.5" y2="302.2" stroke="#b0b0b0" stroke-width="0.8" />
<rect x="237.3" y="299.7" width="6" height="6" fill="#fdfdfd" stroke="#a2a2a2" stroke-width="0.9" rx="1.2" />
<line x1="238.60000000000002" y1="302.7" x2="242.0" y2="302.7" stroke="#3a58c0" stroke-width="1" />
<line x1="240.3" y1="301.0" x2="240.3" y2="304.4" stroke="#3a58c0" stroke-width="1" />
<g transform="translate(253 301.9)"><path d="M-4.300 -2.300 L0 -4.800 L4.300 -2.300 L4.300 2.600 L0 5 L-4.300 2.600 Z" fill="#ffc226" stroke="#d48a0a" stroke-width=".7"/><path d="M0 .2 L4.300 -2.300 L4.300 2.600 L0 5 Z" fill="#f6a410"/><path d="M-4.300 -2.300 L0 -4.800 L4.300 -2.300 L0 .2 Z" fill="#ffe672" stroke="#e09a18" stroke-width=".4"/><path d="M-2.200 -2.600 L0 -3.800 L2.200 -2.600 L0 -1.400 Z" fill="#fffbd0"/><path d="M0 .2 V5" stroke="#d48a0a" stroke-width=".6"/></g>
<text x="262" y="305.3" font-size="9.2" fill="#101010" font-weight="normal" text-anchor="start" textLength="22.5" lengthAdjust="spacingAndGlyphs" >Planes</text>
<line x1="243.5" y1="314.3" x2="247.5" y2="314.3" stroke="#b0b0b0" stroke-width="0.8" />
<rect x="237.3" y="311.8" width="6" height="6" fill="#fdfdfd" stroke="#a2a2a2" stroke-width="0.9" rx="1.2" />
<line x1="238.60000000000002" y1="314.8" x2="242.0" y2="314.8" stroke="#3a58c0" stroke-width="1" />
<line x1="240.3" y1="313.1" x2="240.3" y2="316.5" stroke="#3a58c0" stroke-width="1" />
<g transform="translate(253 314.0)"><path d="M-4.300 -2.300 L0 -4.800 L4.300 -2.300 L4.300 2.600 L0 5 L-4.300 2.600 Z" fill="#ffc226" stroke="#d48a0a" stroke-width=".7"/><path d="M0 .2 L4.300 -2.300 L4.300 2.600 L0 5 Z" fill="#f6a410"/><path d="M-4.300 -2.300 L0 -4.800 L4.300 -2.300 L0 .2 Z" fill="#ffe672" stroke="#e09a18" stroke-width=".4"/><path d="M-2.200 -2.600 L0 -3.800 L2.200 -2.600 L0 -1.400 Z" fill="#fffbd0"/><path d="M0 .2 V5" stroke="#d48a0a" stroke-width=".6"/></g>
<text x="262" y="317.40000000000003" font-size="9.2" fill="#101010" font-weight="normal" text-anchor="start" textLength="15.5" lengthAdjust="spacingAndGlyphs" >Axes</text>
<line x1="243.5" y1="326.4" x2="247.5" y2="326.4" stroke="#b0b0b0" stroke-width="0.8" />
<rect x="237.3" y="323.9" width="6" height="6" fill="#fdfdfd" stroke="#a2a2a2" stroke-width="0.9" rx="1.2" />
<line x1="238.60000000000002" y1="326.9" x2="242.0" y2="326.9" stroke="#3a58c0" stroke-width="1" />
<line x1="240.3" y1="325.2" x2="240.3" y2="328.59999999999997" stroke="#3a58c0" stroke-width="1" />
<g transform="translate(253 326.09999999999997)"><path d="M-4.300 -2.300 L0 -4.800 L4.300 -2.300 L4.300 2.600 L0 5 L-4.300 2.600 Z" fill="#ffc226" stroke="#d48a0a" stroke-width=".7"/><path d="M0 .2 L4.300 -2.300 L4.300 2.600 L0 5 Z" fill="#f6a410"/><path d="M-4.300 -2.300 L0 -4.800 L4.300 -2.300 L0 .2 Z" fill="#ffe672" stroke="#e09a18" stroke-width=".4"/><path d="M-2.200 -2.600 L0 -3.800 L2.200 -2.600 L0 -1.400 Z" fill="#fffbd0"/><path d="M0 .2 V5" stroke="#d48a0a" stroke-width=".6"/></g>
<text x="262" y="329.5" font-size="9.2" fill="#101010" font-weight="normal" text-anchor="start" textLength="22" lengthAdjust="spacingAndGlyphs" >Points</text>
<line x1="243.5" y1="338.5" x2="247.5" y2="338.5" stroke="#b0b0b0" stroke-width="0.8" />
<rect x="237.3" y="336.0" width="6" height="6" fill="#fdfdfd" stroke="#a2a2a2" stroke-width="0.9" rx="1.2" />
<line x1="238.60000000000002" y1="339.0" x2="242.0" y2="339.0" stroke="#3a58c0" stroke-width="1" />
<line x1="240.3" y1="337.3" x2="240.3" y2="340.7" stroke="#3a58c0" stroke-width="1" />
<g transform="translate(253 338.2)"><path d="M-4.300 -2.300 L0 -4.800 L4.300 -2.300 L4.300 2.600 L0 5 L-4.300 2.600 Z" fill="#ffc226" stroke="#d48a0a" stroke-width=".7"/><path d="M0 .2 L4.300 -2.300 L4.300 2.600 L0 5 Z" fill="#f6a410"/><path d="M-4.300 -2.300 L0 -4.800 L4.300 -2.300 L0 .2 Z" fill="#ffe672" stroke="#e09a18" stroke-width=".4"/><path d="M-2.200 -2.600 L0 -3.800 L2.200 -2.600 L0 -1.400 Z" fill="#fffbd0"/><path d="M0 .2 V5" stroke="#d48a0a" stroke-width=".6"/></g>
<text x="262" y="341.6" font-size="9.2" fill="#101010" font-weight="normal" text-anchor="start" textLength="39.5" lengthAdjust="spacingAndGlyphs" >Parameters</text>
<line x1="243.5" y1="350.7" x2="247.5" y2="350.7" stroke="#b0b0b0" stroke-width="0.8" />
<rect x="237.3" y="348.2" width="6" height="6" fill="#fdfdfd" stroke="#a2a2a2" stroke-width="0.9" rx="1.2" />
<line x1="238.60000000000002" y1="351.2" x2="242.0" y2="351.2" stroke="#3a58c0" stroke-width="1" />
<line x1="240.3" y1="349.5" x2="240.3" y2="352.9" stroke="#3a58c0" stroke-width="1" />
<g transform="translate(253 350.4)"><path d="M-4.300 -2.300 L0 -4.800 L4.300 -2.300 L4.300 2.600 L0 5 L-4.300 2.600 Z" fill="#ffc226" stroke="#d48a0a" stroke-width=".7"/><path d="M0 .2 L4.300 -2.300 L4.300 2.600 L0 5 Z" fill="#f6a410"/><path d="M-4.300 -2.300 L0 -4.800 L4.300 -2.300 L0 .2 Z" fill="#ffe672" stroke="#e09a18" stroke-width=".4"/><path d="M-2.200 -2.600 L0 -3.800 L2.200 -2.600 L0 -1.400 Z" fill="#fffbd0"/><path d="M0 .2 V5" stroke="#d48a0a" stroke-width=".6"/></g>
<text x="262" y="353.8" font-size="9.2" fill="#101010" font-weight="normal" text-anchor="start" textLength="20" lengthAdjust="spacingAndGlyphs" >Styles</text>
<rect x="232" y="402" width="137.5" height="13" fill="#ffffff" />
<path d="M232.5 401.500 V412.500 Q232.5 414 234 414 H257.5 Q259.0 414 259.0 412.500 V401.500" fill="#f4f6fa" stroke="#a8b0bc" stroke-width=".9"/>
<path d="M260.0 401.500 V412.500 Q260.0 414 261.5 414 H293.0 Q294.5 414 294.5 412.500 V401.500" fill="#f4f6fa" stroke="#a8b0bc" stroke-width=".9"/>
<path d="M295.5 401.500 V412.500 Q295.5 414 297 414 H329.5 Q331.0 414 331.0 412.500 V401.500" fill="url(#org)" stroke="#a8b0bc" stroke-width=".9"/>
<path d="M332.0 401.500 V412.500 Q332.0 414 333.5 414 H364.5 Q366.0 414 366.0 412.500 V401.500" fill="#f4f6fa" stroke="#a8b0bc" stroke-width=".9"/>
<path d="M234.300 405 L240 403 L244 409.800 L238.300 412.300 Z" fill="#1a60e8" stroke="#0a2a80" stroke-width=".4"/><path d="M235.300 405.300 L239.500 403.800 L240.500 406 L236.500 407.800 Z" fill="#c8e4ff"/><path d="M238.300 412.300 L244 409.800 L244.300 411 L238.800 413.300 Z" fill="#202840"/>
<text x="247" y="411.3" font-size="9" fill="#303030" font-weight="normal" text-anchor="start" textLength="9.5" lengthAdjust="spacingAndGlyphs" >P0</text>
<path d="M262.300 405 L268 403 L272 409.800 L266.300 412.300 Z" fill="#58d020" stroke="#2a7a08" stroke-width=".4"/><path d="M263.300 405.300 L267.500 403.800 L268.500 406 L264.500 407.800 Z" fill="#e0ffc8"/><path d="M266.300 412.300 L272 409.800 L272.300 411 L266.800 413.300 Z" fill="#203020"/>
<text x="275.5" y="411.3" font-size="9" fill="#303030" font-weight="normal" text-anchor="start" textLength="15" lengthAdjust="spacingAndGlyphs" >To...</text>
<path d="M299.500 403 V410 H302" fill="none" stroke="#2a50d0" stroke-width="1"/><circle cx="304.500" cy="405.500" r="2.400" fill="#f6b020" stroke="#c07a08" stroke-width=".5"/><circle cx="304.500" cy="410.500" r="2.400" fill="#f6b020" stroke="#c07a08" stroke-width=".5"/>
<text x="311" y="411.3" font-size="9" fill="#101010" font-weight="bold" text-anchor="start" textLength="16.5" lengthAdjust="spacingAndGlyphs" >En...</text>
<path d="M340 404.500 H336 V412.500 H340" fill="none" stroke="#2a50d0" stroke-width="1"/><path d="M339.500 412.500 V409 H338 L341 406 L344 409 H342.500 V412.500 Z" fill="#20b030"/><path d="M339.500 403.500 H343 V402.200 L345.500 404.300 L343 406.400 V405.100 H339.500 Z" fill="#e02020"/>
<text x="347.5" y="411.3" font-size="9" fill="#303030" font-weight="normal" text-anchor="start" textLength="17" lengthAdjust="spacingAndGlyphs" >Op...</text>
<rect x="369.5" y="171" width="16" height="244" fill="#e9ebef" />
<line x1="385" y1="184" x2="385" y2="415" stroke="#f4f4f6" stroke-width="1" />
<path d="M372.500 172.500 H384.500 V215 Q384.500 217.500 382 217.500 H372.500 Z" fill="#d6d8de" stroke="#c2c6ce" stroke-width=".8"/>
<g transform="translate(377.700 177.600)" fill="#2a6ae0"><rect x="-1" y="-5" width="2" height="10" transform="rotate(0)"/><rect x="-1" y="-5" width="2" height="10" transform="rotate(45)"/><rect x="-1" y="-5" width="2" height="10" transform="rotate(90)"/><rect x="-1" y="-5" width="2" height="10" transform="rotate(135)"/><circle r="3.600"/><circle r="1.500" fill="#eef4ff"/></g>
<text transform="translate(375 185) rotate(90)" font-size="8.800" fill="#101010" textLength="27.500" lengthAdjust="spacingAndGlyphs">Options</text>
<rect x="385.5" y="171" width="221" height="13.5" fill="#eef0f5" />
<path d="M386.500 184 V173.500 Q386.500 172.500 387.500 172.500 H427.500 Q428.500 172.500 428.500 173.500 V184" fill="#f8f9fb" stroke="#c0c6d0" stroke-width=".9"/>
<text x="388" y="181.3" font-size="9" fill="#202020" font-weight="normal" text-anchor="start" textLength="35" lengthAdjust="spacingAndGlyphs" >Start Page</text>
<path d="M428.500 184 V173.500 Q428.500 172 430 172 H507 Q508.500 172 508.500 173.500 V184 Z" fill="url(#org)" stroke="#e0a050" stroke-width=".9"/>
<circle cx="436" cy="175.300" r="1.900" fill="#2a7be8"/><path d="M435 177 Q434.500 180 432.500 182 Q436 183.500 439.500 182 Q437 180 437.500 177 Z" fill="#2a7be8"/>
<text x="444.5" y="181.3" font-size="9.2" fill="#101010" font-weight="bold" text-anchor="start" textLength="57.5" lengthAdjust="spacingAndGlyphs" >Left Side Plate*</text>
<rect x="583" y="173.800" width="7" height="1.500" fill="#202020"/><path d="M583 176.500 H590 L586.500 180.500 Z" fill="#202020"/>
<path d="M595.500 173.500 L602 180.500 M602 173.500 L595.500 180.500" stroke="#202020" stroke-width="1.400" fill="none"/>
<rect x="385.5" y="184.5" width="221" height="230" fill="url(#viewg)" />
<line x1="385.5" y1="184.5" x2="606" y2="184.5" stroke="#3a5a92" stroke-width="1" />
<path d="M427.400 201.500 Q427.400 195.900 433 196.800 L557 219.800 Q561.800 220.700 562 225.300 L562.600 242.500 Q562.800 247 558.300 246.200 L512.500 237.700 Q501.400 235.600 501.400 247 L501.400 390.300 L427.400 376 Z" fill="#3a3a3a" transform="translate(-1.100 -.4)"/>
<path d="M555 219.400 L560 220.300 Q565.300 221.300 565.400 226.500 L565.700 244 Q565.700 249.200 560.500 248.200 L553 246.800 Z" fill="#3a3a3a"/>
<path d="M427.400 201.500 Q427.400 195.900 433 196.800 L557 219.800 Q561.800 220.700 562 225.300 L562.600 242.500 Q562.800 247 558.300 246.200 L512.500 237.700 Q501.400 235.600 501.400 247 L501.400 390.300 L427.400 376 Z" fill="#3a3a3a" transform="translate(1.200 .7)"/>
<path d="M501.400 248 V390.300 L503.500 391.700 V249 Z" fill="#c8c8c8"/>
<path d="M427.400 201.500 Q427.400 195.900 433 196.800 L557 219.800 Q561.800 220.700 562 225.300 L562.600 242.500 Q562.800 247 558.300 246.200 L512.500 237.700 Q501.400 235.600 501.400 247 L501.400 390.300 L427.400 376 Z" fill="#a6a6a6"/>
<path d="M428.300 194.200 L566 219.700 L566 248.700 L503.600 236.900 L503.600 392.400 L428.300 377.800 Z" fill="none" stroke="#1fc0c0" stroke-width="1.100"/>
<circle cx="451" cy="265.2" r=".65" fill="#181818"/>
<circle cx="436.9" cy="287.1" r=".65" fill="#181818"/>
<circle cx="441.3" cy="287.9" r=".65" fill="#181818"/>
<circle cx="450.8" cy="290" r=".65" fill="#181818"/>
<circle cx="444" cy="205.5" r=".95" fill="#101010"/>
<circle cx="431" cy="215.5" r=".95" fill="#101010"/>
<circle cx="447" cy="218.5" r=".95" fill="#101010"/>
<circle cx="481" cy="212.5" r=".95" fill="#101010"/>
<circle cx="519" cy="219.5" r=".95" fill="#101010"/>
<circle cx="555.5" cy="226" r=".95" fill="#101010"/>
<circle cx="430.5" cy="235" r=".95" fill="#101010"/>
<circle cx="447" cy="238" r=".95" fill="#101010"/>
<circle cx="430.9" cy="262.1" r=".95" fill="#101010"/>
<circle cx="447.4" cy="265.2" r=".95" fill="#101010"/>
<circle cx="430.9" cy="282" r=".95" fill="#101010"/>
<circle cx="447.4" cy="284.5" r=".95" fill="#101010"/>
<circle cx="431" cy="356" r=".95" fill="#101010"/>
<circle cx="447.5" cy="358.5" r=".95" fill="#101010"/>
<circle cx="480.5" cy="364.5" r=".95" fill="#101010"/>
<circle cx="496.5" cy="367.5" r=".95" fill="#101010"/>
<circle cx="481" cy="384" r=".95" fill="#101010"/>
<circle cx="496.5" cy="386.5" r=".95" fill="#101010"/>
<ellipse cx="439.300" cy="272.800" rx="3.900" ry="5.200" fill="#8e8e8e" stroke="#2a2a2a" stroke-width=".9" transform="rotate(-12 439.300 272.800)"/><ellipse cx="440.700" cy="273.200" rx="2.300" ry="3.500" fill="#8c9cc4" stroke="#3a3a3a" stroke-width=".5" transform="rotate(-12 440.700 273.200)"/>
<path d="M417.300 375.500 Q418 360 426.500 358.800 Q436 359.500 439.300 373.500" fill="none" stroke="#8a8a8a" stroke-width=".9"/><path d="M420.500 375 Q421 363.500 426.500 362.500 Q433 363 436 373.500" fill="none" stroke="#c8c8c8" stroke-width=".8"/>
<line x1="426.6" y1="373" x2="426.6" y2="349" stroke="#f018d8" stroke-width="1.9" />
<path d="M423.400 351.200 L426.600 340.500 L429.800 351.200 Z" fill="#f018d8"/>
<line x1="428" y1="374.8" x2="446" y2="377" stroke="#f4d818" stroke-width="2" />
<path d="M445 373.300 L454.400 377.300 L444.600 380.600 Z" fill="#f8e418"/>
<line x1="425.5" y1="374.5" x2="416" y2="377.3" stroke="#4a52b8" stroke-width="2" />
<path d="M416 374.300 L407.600 380.300 L417.500 380.600 Z" fill="#5058c0"/>
<circle cx="426.500" cy="373.900" r="2.900" fill="#f08010" stroke="#a85808" stroke-width=".4"/><circle cx="425.700" cy="373" r="1" fill="#ffc060"/>
<text x="425.2" y="338.3" font-size="8.3" fill="#282828" font-weight="bold" text-anchor="middle" >y</text>
<text x="458.5" y="382.3" font-size="8.3" fill="#282828" font-weight="bold" text-anchor="middle" >x</text>
<text x="403" y="384.5" font-size="8.3" fill="#282828" font-weight="bold" text-anchor="middle" >z</text>
<path d="M385.500 414.400 H469.500 V413 Q469.500 411.600 471 411.600 H521.500 Q523 411.600 523 413 V414.400 H606 V416 H385.500 Z" fill="#f2f2f5" stroke="none"/><path d="M385.500 414.400 H469.500 V413 Q469.500 411.600 471 411.600 H521.500 Q523 411.600 523 413 V414.400 H606" fill="none" stroke="#8e929e" stroke-width=".8"/><line x1="472" y1="413.600" x2="520.500" y2="413.600" stroke="#8c8c96" stroke-width="1.700"/>
<rect x="530.3" y="405.7" width="71" height="6.3" fill="#f89a28" stroke="#8a5a18" stroke-width="0.7" />
<line x1="530.3" y1="403.8" x2="530.3" y2="406" stroke="#5a4a30" stroke-width="0.8" />
<line x1="601.3" y1="403.8" x2="601.3" y2="406" stroke="#5a4a30" stroke-width="0.8" />
<text x="566" y="401.5" font-size="8.8" fill="#303030" font-weight="normal" text-anchor="middle" textLength="29.5" lengthAdjust="spacingAndGlyphs" >500mm</text>
<path d="M590.7 194.1 V205.1 M585.2 199.6 H596.2" stroke="#1a78f0" stroke-width="2.200"/>
<path d="M590.7 192.4 L593.0 195.4 L588.4 195.4 Z" fill="#1a78f0"/>
<path d="M590.7 206.8 L588.4 203.8 L593.0 203.8 Z" fill="#1a78f0"/>
<path d="M583.5 199.6 L586.5 197.3 L586.5 201.9 Z" fill="#1a78f0"/>
<path d="M597.9 199.6 L594.9 201.9 L594.9 197.3 Z" fill="#1a78f0"/>
<path d="M590.7 196.1 V203.1 M587.2 199.6 H594.2" stroke="#48e4f8" stroke-width="1.600" stroke-linecap="round"/>
<path d="M583.500 220 H595.500" stroke="#1a78f0" stroke-width="2.200"/>
<path d="M599.3 220.0 L595.9 222.6 L595.9 217.4 Z" fill="#1a78f0"/>
<path d="M591.500 213.500 Q586.500 216 586.800 220 Q587 224.500 591.500 226.800" fill="none" stroke="#1a78f0" stroke-width="2.200"/>
<path d="M593.0 212.3 L591.9 215.3 L589.8 212.0 Z" fill="#1a78f0"/>
<path d="M593.0 228.0 L589.8 228.3 L591.9 225.0 Z" fill="#1a78f0"/>
<path d="M585 220 H593 M587.300 217.500 Q586.600 220 587.300 222.500" fill="none" stroke="#48e4f8" stroke-width="1.500" stroke-linecap="round"/>
<path d="M601.7 219.2 H605.7 L603.7 221.7 Z" fill="#202020"/>
<path d="M583.500 239.200 H591.800 V243 H583.500 Z" fill="#1a78f0"/><path d="M583.800 237.200 H586.800 V239.500 H583.800 Z" fill="#2a88f8"/><path d="M584.500 241 H590.500" stroke="#8fe0ff" stroke-width="1"/>
<path d="M591.500 241 L597.500 236.300 Q599.500 241 597.500 245.800 Z" fill="#2a80f0"/><ellipse cx="596.800" cy="241" rx="1.900" ry="4.300" fill="#b8f0ff"/><circle cx="592.300" cy="241" r="1.200" fill="#0a2a90"/>
<path d="M601.7 240 H605.7 L603.7 242.5 Z" fill="#202020"/>
<g transform="translate(0 -1.500) rotate(-18 590 262)"><path d="M582.500 261.500 H591.500 V266.500 H582.500 Z" fill="#2a80f0"/><path d="M584 259.800 H587.500 V262 H584 Z" fill="#2a88f8"/><path d="M584 264.200 H590" stroke="#c8f0ff" stroke-width="2"/><path d="M591 264 L597.500 258.800 Q600 264 597.500 269.200 Z" fill="#1a60e0"/><ellipse cx="597" cy="264" rx="2.100" ry="4.600" fill="#9fe0ff"/><circle cx="592" cy="264" r="1.300" fill="#0a2a90"/></g>
<rect x="583.500" y="276.500" width="14.500" height="10" rx="1" fill="#1a50e0" stroke="#a8d0ff" stroke-width=".8"/><path d="M590.700 276.500 V286.500 M583.500 281.500 H598" stroke="#d8ecff" stroke-width="1"/><path d="M587 288.500 H594.500" stroke="#d0d8e8" stroke-width="1.200"/>
<path d="M601.5 280.5 H605.5 L603.5 283.0 Z" fill="#202020"/>
<g><path d="M583.500 298.500 V296 H586 M595.500 296 H598 V298.500 M598 307.500 V310 H595.500 M586 310 H583.500 V307.500" fill="none" stroke="#1a40d0" stroke-width="1.200"/><circle cx="589.500" cy="301.500" r="4" fill="#d8ecff" stroke="#7ab0e8" stroke-width="1"/><path d="M592.500 305 L597 309" stroke="#f0a020" stroke-width="2" stroke-linecap="round"/></g>
<g><circle cx="589.500" cy="322.500" r="4" fill="#d8ecff" stroke="#7ab0e8" stroke-width="1"/><path d="M592.500 326 L597 330" stroke="#f0a020" stroke-width="2" stroke-linecap="round"/></g>
<path d="M584 341.500 Q590 337.500 596 339 Q598.500 340 598 343 L597 349 L590.500 352 L584.500 348.500 Z" fill="#1a60e8" stroke="#0a2a90" stroke-width=".7"/><path d="M585.500 342.500 Q590.500 340 595.500 341.500 Q593 344.500 588 345.500 Z" fill="#9fd4ff"/><path d="M588.500 346 L595.500 343 L595 348 L590.500 350.500 Z" fill="#0a2a90"/>
</g>
</svg>
</body></html>
